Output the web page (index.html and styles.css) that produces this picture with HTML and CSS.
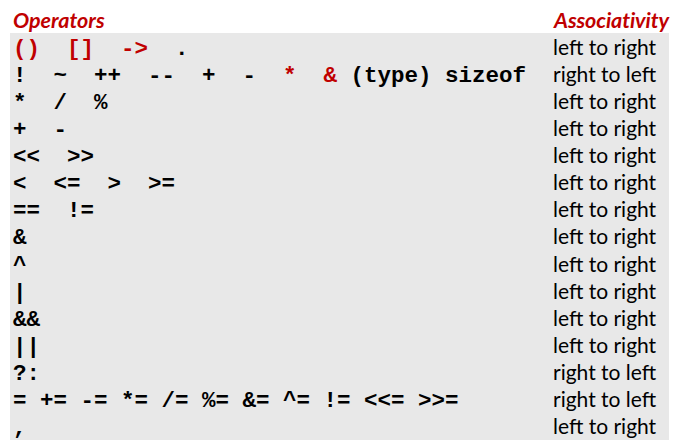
FILE: index.html
```html
<!DOCTYPE html>
<html>
<head>
<meta charset="utf-8">
<link rel="stylesheet" href="styles.css">
</head>
<body>
<div class="page">
  <div class="head">
    <div class="h-ops">Operators</div>
    <div class="h-assoc">Associativity</div>
  </div>
  <div class="table">
    <div class="row"><div class="ops"><span class="red">()  []  -></span>  .</div><div class="assoc">left to right</div></div>
    <div class="row"><div class="ops">!  ~  ++  --  +  -  <span class="red">*</span>  <span class="red">&amp;</span> (type) sizeof</div><div class="assoc">right to left</div></div>
    <div class="row"><div class="ops">*  /  %</div><div class="assoc">left to right</div></div>
    <div class="row"><div class="ops">+  -</div><div class="assoc">left to right</div></div>
    <div class="row"><div class="ops">&lt;&lt;  &gt;&gt;</div><div class="assoc">left to right</div></div>
    <div class="row"><div class="ops">&lt;  &lt;=  &gt;  &gt;=</div><div class="assoc">left to right</div></div>
    <div class="row"><div class="ops">==  !=</div><div class="assoc">left to right</div></div>
    <div class="row"><div class="ops">&amp;</div><div class="assoc">left to right</div></div>
    <div class="row"><div class="ops">^</div><div class="assoc">left to right</div></div>
    <div class="row"><div class="ops">|</div><div class="assoc">left to right</div></div>
    <div class="row"><div class="ops">&amp;&amp;</div><div class="assoc">left to right</div></div>
    <div class="row"><div class="ops">||</div><div class="assoc">left to right</div></div>
    <div class="row"><div class="ops">?:</div><div class="assoc">right to left</div></div>
    <div class="row"><div class="ops">= += -= *= /= %= &amp;= ^= != &lt;&lt;= &gt;&gt;=</div><div class="assoc">right to left</div></div>
    <div class="row"><div class="ops">,</div><div class="assoc">left to right</div></div>
  </div>
</div>
</body>
</html>
```

FILE: styles.css
```css
html, body {
  margin: 0;
  padding: 0;
  background: #ffffff;
}

.page {
  width: 680px;
  height: 448px;
  padding-left: 10px;
  box-sizing: border-box;
}

.head {
  display: grid;
  grid-template-columns: 543px 1fr;
  height: 33px;
  align-items: end;
  font-family: Lato, "Liberation Sans", sans-serif;
  font-weight: bold;
  font-style: italic;
  font-size: 21.5px;
  line-height: 26px;
  color: #c00000;
}

.h-ops {
  padding-left: 3px;
}

.h-assoc {
  padding-left: 1px;
  letter-spacing: -0.1px;
}

.table {
  width: 659px;
  background: #e8e8e8;
  padding-bottom: 1px;
}

.row {
  display: grid;
  grid-template-columns: 543px 1fr;
  align-items: baseline;
  height: 27.07px;
  padding-top: 2px;
  box-sizing: border-box;
}

.ops {
  padding-left: 3px;
  font-family: "Liberation Mono", "Courier New", monospace;
  font-weight: bold;
  font-size: 22.5px;
  line-height: 24px;
  white-space: pre;
  color: #000000;
}

.red {
  color: #c00000;
}

.assoc {
  font-family: Lato, "Liberation Sans", sans-serif;
  font-size: 21px;
  line-height: 24px;
  color: #000000;
}
```
